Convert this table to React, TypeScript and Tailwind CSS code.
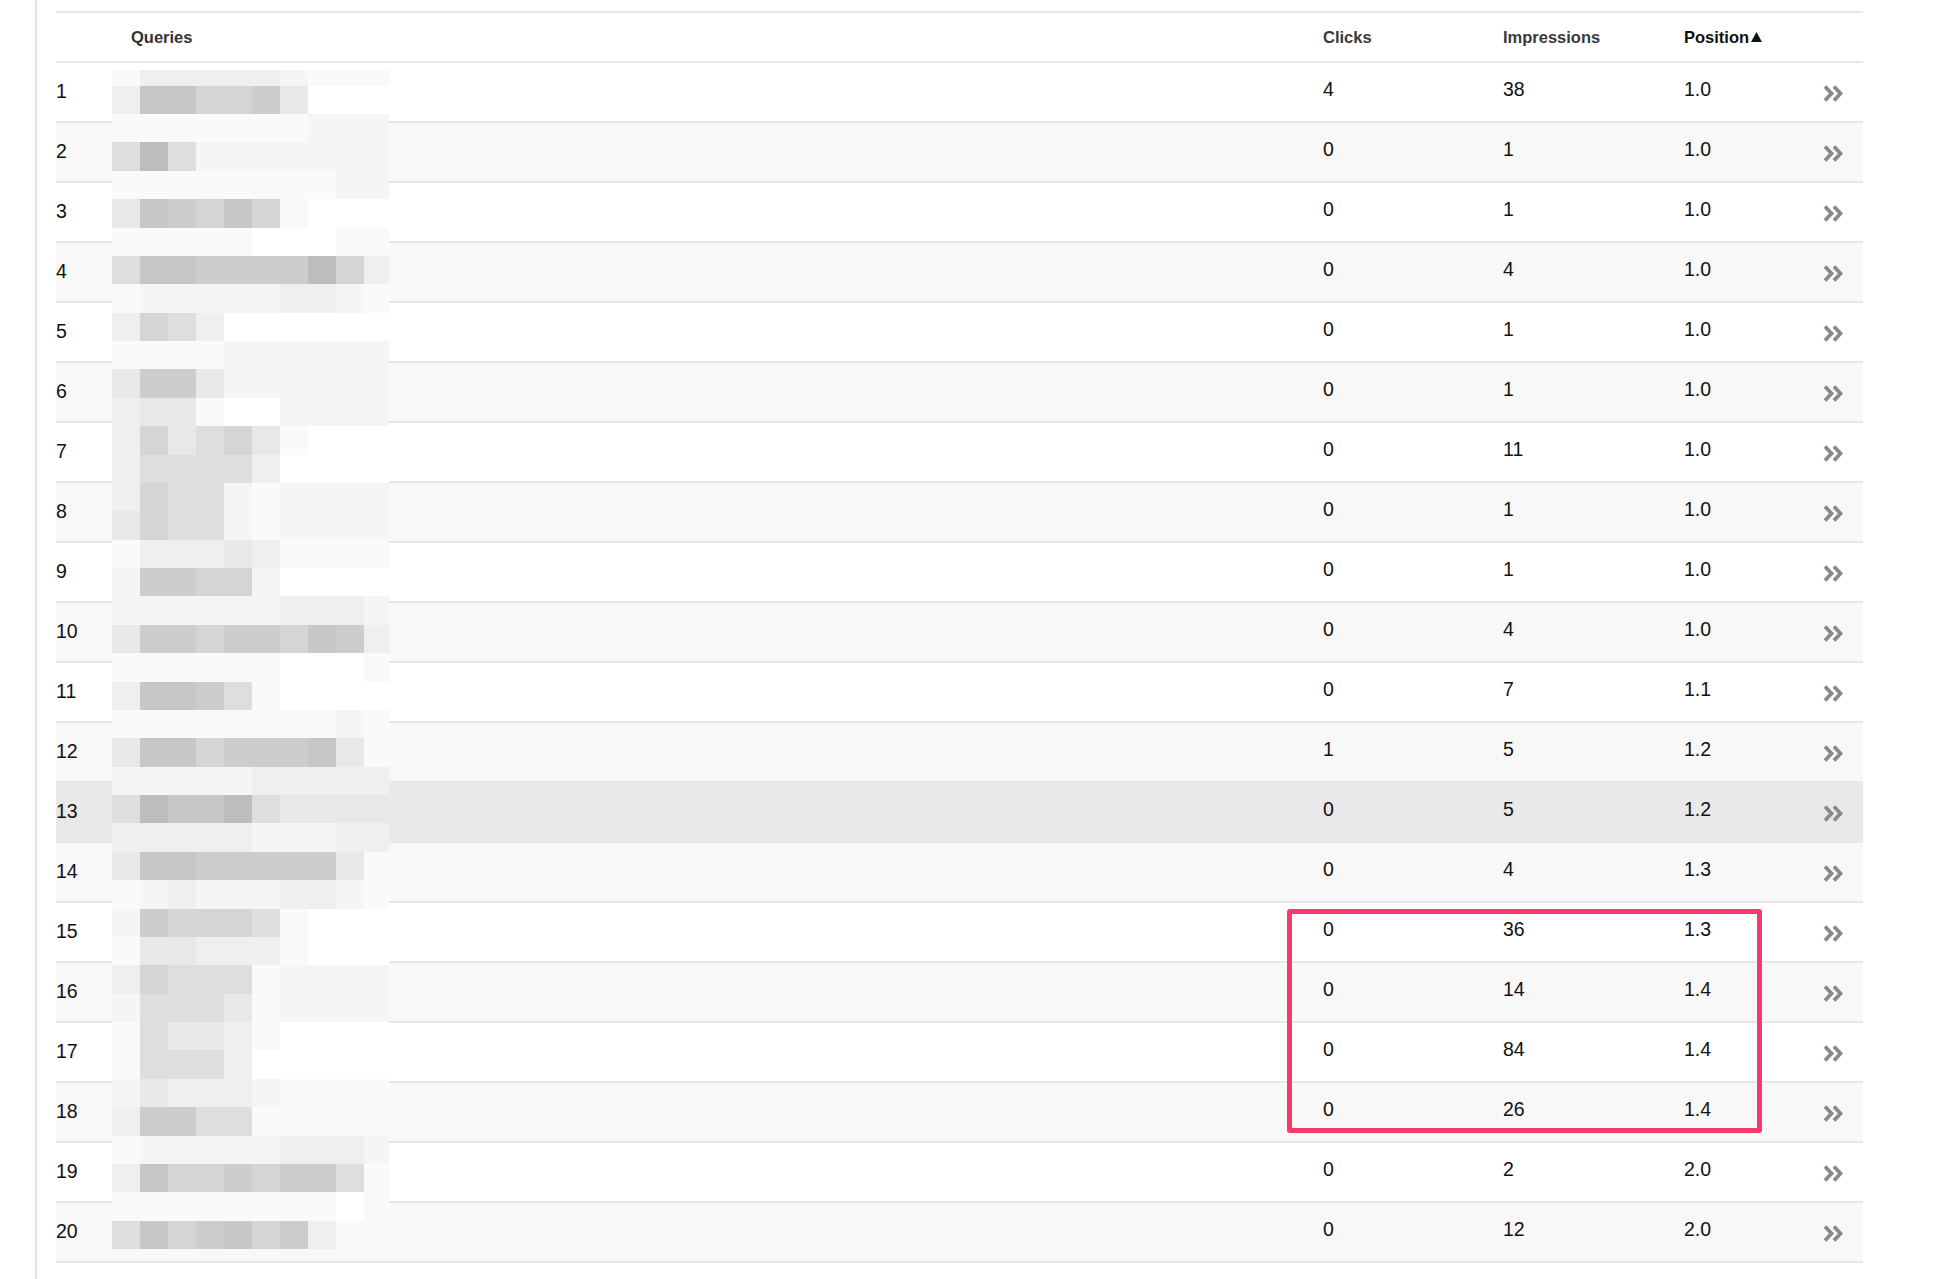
import React from "react";

const ROWS: [number, number, string][] = [
  [4, 38, "1.0"],
  [0, 1, "1.0"],
  [0, 1, "1.0"],
  [0, 4, "1.0"],
  [0, 1, "1.0"],
  [0, 1, "1.0"],
  [0, 11, "1.0"],
  [0, 1, "1.0"],
  [0, 1, "1.0"],
  [0, 4, "1.0"],
  [0, 7, "1.1"],
  [1, 5, "1.2"],
  [0, 5, "1.2"],
  [0, 4, "1.3"],
  [0, 36, "1.3"],
  [0, 14, "1.4"],
  [0, 84, "1.4"],
  [0, 26, "1.4"],
  [0, 2, "2.0"],
  [0, 12, "2.0"],
];

const MOSAIC: string[] = [
  "acccccbaaa",
  "chhffgdWWW",
  "aaaaaaabbb",
  "eiebbbbbbb",
  "aaaaaaaabb",
  "dhgfhfaWWW",
  "aaaaaWWWaa",
  "ehhggggifc",
  "abbbbbccba",
  "cfecWWWWWW",
  "aaaabbbbbb",
  "dggdbbbbbb",
  "cddaWWbbbb",
  "cfdefdaWWW",
  "ceeeecWWWW",
  "cfeebabbbb",
  "dfeebabbbb",
  "acccdcaaaa",
  "bggffbWWWW",
  "bbbbbbcccb",
  "dggfggfhgc",
  "aaaaaaWWWa",
  "chhgeaWWWW",
  "aaaaaaaaba",
  "dhhfggghda",
  "bbbbbccccc",
  "eihhiedddd",
  "cccccbbbcc",
  "dhhgggggda",
  "abcbbbccba",
  "bgfffeaWWW",
  "addcccaWWW",
  "cfeeeabbbb",
  "beeedabbbb",
  "aeddcaWWWW",
  "aeeecWWWWW",
  "bdcccbaaaa",
  "cggeeaaaaa",
  "abbbbbcccb",
  "chffgfggea",
  "aaaaaaaaWa",
  "ehfghfgcaa",
];

const SHADE: Record<string, string> = {
  W: "bg-[#ffffff]",
  a: "bg-[#fafafa]",
  b: "bg-[#f5f5f5]",
  c: "bg-[#efefef]",
  d: "bg-[#e8e8e8]",
  e: "bg-[#dedede]",
  f: "bg-[#d5d5d5]",
  g: "bg-[#cdcdcd]",
  h: "bg-[#c7c7c7]",
  i: "bg-[#bdbdbd]",
};

function Chevrons() {
  return (
    <svg width="21" height="17" viewBox="0 0 21 17" fill="none">
      <path d="M2 1.5 L8.5 8.5 L2 15.5" stroke="#8a8a8a" strokeWidth="3.8" />
      <path d="M11 1.5 L17.5 8.5 L11 15.5" stroke="#8a8a8a" strokeWidth="3.8" />
    </svg>
  );
}

function SortUp() {
  return (
    <svg width="11" height="10" viewBox="0 0 11 10" className="ml-[2px]">
      <path d="M5.5 0 L11 10 L0 10 Z" fill="#111" />
    </svg>
  );
}

export default function App() {
  return (
    <div className="min-h-screen bg-white font-['Liberation_Sans',Arial,sans-serif]">
      <div className="ml-[35px] min-h-[1279px] border-l-2 border-[#e3e3e3] pl-[19px] pr-[70px] pt-[11px]">
        <div className="relative">
          {/* header */}
          <div className="flex h-[52px] items-center border-y-2 border-[#e9e9e9] text-[16.5px] font-bold">
            <div className="w-[75px]" />
            <div className="flex-1 text-[#333]">Queries</div>
            <div className="w-[180px] text-[#3a3a3a]">Clicks</div>
            <div className="w-[181px] text-[#3a3a3a]">Impressions</div>
            <div className="flex w-[139px] items-center text-[#111]">
              Position
              <SortUp />
            </div>
            <div className="w-[40px]" />
          </div>

          {/* rows */}
          {ROWS.map((r, i) => {
            const bg =
              i === 12 ? "bg-[#e9e9e9]" : i % 2 === 1 ? "bg-[#f8f8f8]" : "bg-white";
            return (
              <div
                key={i}
                className={`flex h-[60px] items-start border-b-2 border-[#e8e8e8] text-[19.5px] leading-[24px] text-[#111] ${bg}`}
              >
                <div className="w-[75px] pt-[16px]">{i + 1}</div>
                <div className="flex-1" />
                <div className="w-[180px] pt-[14px]">{r[0]}</div>
                <div className="w-[181px] pt-[14px]">{r[1]}</div>
                <div className="w-[139px] pt-[14px]">{r[2]}</div>
                <div className="w-[40px] pt-[22px]">
                  <Chevrons />
                </div>
              </div>
            );
          })}

          {/* pixelated query overlay */}
          <div className="absolute left-[56px] top-[59px] grid grid-cols-[repeat(9,28px)_25px] grid-rows-[15.7px_repeat(41,28.375px)]">
            {MOSAIC.map((row, ri) =>
              row.split("").map((ch, ci) => (
                <div key={`${ri}-${ci}`} className={SHADE[ch]} />
              ))
            )}
          </div>

          {/* highlight box */}
          <div className="absolute left-[1231px] top-[898px] h-[224px] w-[475px] rounded-[3px] border-[5px] border-[#f53a6c]" />
        </div>
      </div>
    </div>
  );
}
